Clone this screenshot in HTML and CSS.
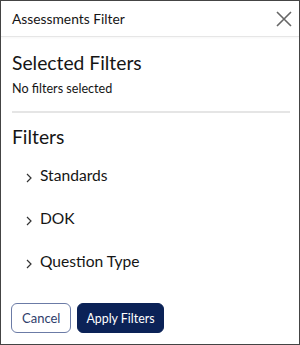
FILE: index.html
```html
<!DOCTYPE html>
<html lang="en">
<head>
    <meta charset="UTF-8">
    <meta name="viewport" content="width=device-width, initial-scale=1.0">
    <title>Assessments Filter</title>
    <link rel="stylesheet" href="styles.css">
</head>
<body>
    <div class="dialog">
        <div class="dialog-header">
            <span class="dialog-title">Assessments Filter</span>
            <button class="close-button" aria-label="Close">
                <svg width="16" height="16" viewBox="0 0 16 16">
                    <path d="M1 1 L15 15 M15 1 L1 15" stroke="#666" stroke-width="1.6" fill="none"/>
                </svg>
            </button>
        </div>

        <div class="dialog-body">
            <h3>Selected Filters</h3>
            <p class="empty-note">No filters selected</p>
            <hr class="divider">

            <h3>Filters</h3>
            <ul class="filter-list">
                <li class="filter-item">
                    <svg class="chevron" width="6" height="10" viewBox="0 0 6 10"><path d="M1 1 L5 5 L1 9" stroke="#333" stroke-width="1.2" fill="none"/></svg>
                    Standards
                </li>
                <li class="filter-item">
                    <svg class="chevron" width="6" height="10" viewBox="0 0 6 10"><path d="M1 1 L5 5 L1 9" stroke="#333" stroke-width="1.2" fill="none"/></svg>
                    DOK
                </li>
                <li class="filter-item">
                    <svg class="chevron" width="6" height="10" viewBox="0 0 6 10"><path d="M1 1 L5 5 L1 9" stroke="#333" stroke-width="1.2" fill="none"/></svg>
                    Question Type
                </li>
            </ul>
        </div>

        <div class="dialog-footer">
            <button class="btn btn-outline">Cancel</button>
            <button class="btn btn-primary">Apply Filters</button>
        </div>
    </div>
</body>
</html>
```

FILE: styles.css
```css
html, body {
    margin: 0;
    padding: 0;
}
body {
    font-family: Lato, Arial, sans-serif;
    color: #151515;
    background: white;
}
.dialog {
    width: 300px;
    height: 345px;
    box-sizing: border-box;
    border: 1px solid #444;
    display: flex;
    flex-direction: column;
}
.dialog-header {
    height: 35px;
    display: flex;
    align-items: center;
    justify-content: space-between;
    padding: 0 6px 0 11px;
    border-bottom: 1px solid #e6e6e6;
    box-shadow: 0 1px 2px rgba(0, 0, 0, 0.04);
}
.dialog-title {
    font-size: 13.8px;
}
.close-button {
    background: none;
    border: none;
    padding: 0;
    width: 18px;
    height: 18px;
    display: flex;
    align-items: center;
    justify-content: center;
    cursor: pointer;
}
.dialog-body {
    flex: 1;
    padding: 14px 9px 0 11px;
}
h3 {
    font-size: 19.3px;
    font-weight: normal;
    margin: 0;
    line-height: 24px;
}
.empty-note {
    font-size: 12.6px;
    margin: 6px 0 0 0;
}
.divider {
    border: none;
    border-top: 2px solid #e5e5e5;
    margin: 15px 0 12px 0;
}
.filter-list {
    list-style: none;
    margin: 0;
    padding: 17px 0 0 14px;
}
.filter-item {
    font-size: 15.6px;
    height: 43.2px;
    line-height: 18px;
    display: flex;
    align-items: flex-start;
}
.filter-item .chevron {
    margin: 7px 8px 0 0;
}
.dialog-footer {
    display: flex;
    gap: 6px;
    padding: 0 0 11px 10px;
}
.btn {
    font-family: Lato, Arial, sans-serif;
    font-size: 13px;
    height: 30px;
    border-radius: 6px;
    padding: 0 10px;
    cursor: pointer;
}
.btn-outline {
    background: white;
    color: #2e3d6b;
    border: 1px solid #6b7ba6;
}
.btn-primary {
    background: #0b2257;
    color: white;
    border: 1px solid #0b2257;
    font-size: 12.4px;
    padding: 0 8px;
}
```
